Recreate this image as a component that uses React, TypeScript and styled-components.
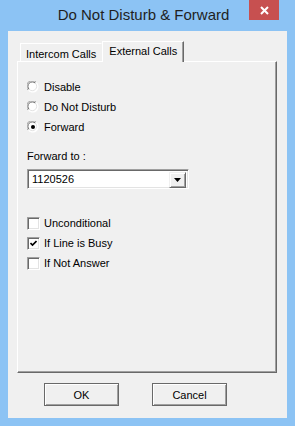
import styled, { createGlobalStyle } from 'styled-components'

const GlobalStyle = createGlobalStyle`
  html, body {
    margin: 0;
    padding: 0;
    background: #8cc3f4;
  }
  * {
    box-sizing: border-box;
  }
`

const Window = styled.div`
  width: 295px;
  height: 426px;
  display: flex;
  flex-direction: column;
  background: #8cc3f4;
  font-family: 'Liberation Sans', Arial, sans-serif;
  font-size: 11px;
  color: #000;
`

const TitleBar = styled.div`
  height: 31px;
  display: grid;
  grid-template-columns: 38px 1fr 38px;
  padding-right: 8px;
`

const Title = styled.div`
  grid-column: 2;
  text-align: center;
  font-size: 15px;
  line-height: 30px;
  color: #1f1f1f;
  white-space: nowrap;
`

const CloseButton = styled.div`
  grid-column: 3;
  width: 30px;
  height: 20px;
  background: #c75050;
  display: flex;
  align-items: center;
  justify-content: center;
`

const Client = styled.div`
  flex: 1;
  margin: 0 8px 8px;
  background: #f0f0f0;
  padding: 10px 10px 0 9px;
  display: flex;
  flex-direction: column;
`

const TabStrip = styled.div`
  height: 20px;
  display: flex;
  align-items: flex-end;
  padding-left: 3px;
  position: relative;
  z-index: 1;
`

const Tab = styled.div<{ $active?: boolean }>`
  height: ${({ $active }) => ($active ? '21px' : '18px')};
  margin-bottom: ${({ $active }) => ($active ? '-1px' : '0')};
  padding: ${({ $active }) => ($active ? '2px 6px 0 6px' : '3px 5px 0 5px')};
  background: #f0f0f0;
  border-top: 1px solid #fff;
  border-left: 1px solid #fff;
  border-right: 1px solid ${({ $active }) => ($active ? '#696969' : '#f0f0f0')};
  box-shadow: ${({ $active }) => ($active ? 'inset -1px 0 0 #a0a0a0' : 'none')};
  line-height: 14px;
  white-space: nowrap;
`

const Panel = styled.div`
  height: 312px;
  border-top: 1px solid #fff;
  border-left: 1px solid #fff;
  border-right: 1px solid #696969;
  border-bottom: 1px solid #696969;
  box-shadow: inset -1px -1px 0 #a0a0a0;
  padding: 15px 9px 0 9px;
  display: flex;
  flex-direction: column;
`

const OptionRow = styled.label<{ $gap: number }>`
  height: 20px;
  display: flex;
  align-items: center;
  gap: ${({ $gap }) => $gap}px;
  line-height: 14px;
`

const FieldLabel = styled.div`
  margin-top: 12px;
  line-height: 14px;
`

const Combo = styled.div`
  margin-top: 6px;
  width: 162px;
  height: 20px;
  display: flex;
  background: #fff;
  border-top: 1px solid #a0a0a0;
  border-left: 1px solid #a0a0a0;
  border-right: 1px solid #fff;
  border-bottom: 1px solid #fff;
  box-shadow: inset 1px 1px 0 #696969, inset -1px -1px 0 #e3e3e3;
  padding: 2px;
`

const ComboValue = styled.div`
  flex: 1;
  padding-left: 2px;
  line-height: 14px;
`

const ComboButton = styled.div`
  width: 17px;
  height: 16px;
  background: #f0f0f0;
  border-top: 1px solid #f0f0f0;
  border-left: 1px solid #f0f0f0;
  border-right: 1px solid #696969;
  border-bottom: 1px solid #696969;
  box-shadow: inset 1px 1px 0 #fff, inset -1px -1px 0 #a0a0a0;
  display: flex;
  align-items: center;
  justify-content: center;
`

const Checks = styled.div`
  margin-top: 24px;
  display: flex;
  flex-direction: column;
`

const CheckBox = styled.span`
  width: 13px;
  height: 13px;
  flex: none;
  background: #fff;
  border-top: 1px solid #a0a0a0;
  border-left: 1px solid #a0a0a0;
  border-right: 1px solid #fff;
  border-bottom: 1px solid #fff;
  box-shadow: inset 1px 1px 0 #696969, inset -1px -1px 0 #e3e3e3;
  display: flex;
  align-items: center;
  justify-content: center;
`

const ButtonRow = styled.div`
  margin-top: 10px;
  padding-left: 27px;
  display: flex;
  gap: 33px;
`

const Button = styled.div`
  width: 75px;
  height: 23px;
  background: #f0f0f0;
  border: 1px solid #696969;
  box-shadow: inset 1px 1px 0 #fff, inset -1px -1px 0 #a0a0a0;
  display: flex;
  align-items: center;
  justify-content: center;
  line-height: 14px;
`

const Radio = ({ checked }: { checked?: boolean }) => (
  <svg width="12" height="12" viewBox="0 0 12 12" style={{ flex: 'none' }}>
    <circle cx="6" cy="6" r="5.5" fill="#fff" />
    <path d="M1.2 9.2 A5.4 5.4 0 0 1 9.2 1.2" fill="none" stroke="#a0a0a0" strokeWidth="1" />
    <path d="M2.2 8.4 A4.3 4.3 0 0 1 8.4 2.2" fill="none" stroke="#696969" strokeWidth="1" />
    <path d="M9.2 1.2 A5.4 5.4 0 0 1 1.2 9.2" fill="none" stroke="#ffffff" strokeWidth="1" />
    <path d="M8.4 2.2 A4.3 4.3 0 0 1 2.2 8.4" fill="none" stroke="#e3e3e3" strokeWidth="1" />
    {checked && <circle cx="6" cy="6" r="2" fill="#000" />}
  </svg>
)

const Check = () => (
  <svg width="7" height="7" viewBox="0 0 7 7">
    <path d="M0.5 3 L2.5 5 L6.5 1" fill="none" stroke="#000" strokeWidth="1.6" />
  </svg>
)

const radios = [
  { label: 'Disable', checked: false },
  { label: 'Do Not Disturb', checked: false },
  { label: 'Forward', checked: true },
]

const checks = [
  { label: 'Unconditional', checked: false },
  { label: 'If Line is Busy', checked: true },
  { label: 'If Not Answer', checked: false },
]

export default function App() {
  return (
    <>
      <GlobalStyle />
      <Window>
        <TitleBar>
          <Title>Do Not Disturb &amp; Forward</Title>
          <CloseButton>
            <svg width="9" height="9" viewBox="0 0 9 9">
              <path d="M1 1 L8 8 M8 1 L1 8" stroke="#fff" strokeWidth="2" />
            </svg>
          </CloseButton>
        </TitleBar>
        <Client>
          <TabStrip>
            <Tab>Intercom Calls</Tab>
            <Tab $active>External Calls</Tab>
          </TabStrip>
          <Panel>
            {radios.map((r) => (
              <OptionRow key={r.label} $gap={5}>
                <Radio checked={r.checked} />
                <span>{r.label}</span>
              </OptionRow>
            ))}
            <FieldLabel>Forward to :</FieldLabel>
            <Combo>
              <ComboValue>1120526</ComboValue>
              <ComboButton>
                <svg width="7" height="4" viewBox="0 0 7 4">
                  <path d="M0 0 H7 L3.5 4 Z" fill="#000" />
                </svg>
              </ComboButton>
            </Combo>
            <Checks>
              {checks.map((c) => (
                <OptionRow key={c.label} $gap={4}>
                  <CheckBox>{c.checked && <Check />}</CheckBox>
                  <span>{c.label}</span>
                </OptionRow>
              ))}
            </Checks>
          </Panel>
          <ButtonRow>
            <Button>OK</Button>
            <Button>Cancel</Button>
          </ButtonRow>
        </Client>
      </Window>
    </>
  )
}
